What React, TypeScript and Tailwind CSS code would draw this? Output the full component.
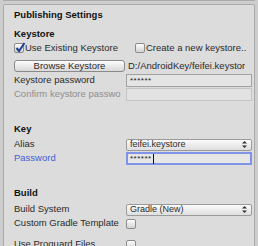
import React from "react";

const font = { fontFamily: '"Liberation Sans", Arial, sans-serif' };

function Check({ checked }: { checked?: boolean }) {
  return (
    <div className="relative w-[10px] h-[10px] shrink-0 rounded-[2px] border border-[#8c8c8c] bg-gradient-to-b from-[#fdfdfd] to-[#d2d2d2]">
      {checked && (
        <svg className="absolute left-[0px] top-[-2px]" width="11" height="11" viewBox="0 0 11 11">
          <path d="M1.5 6 L4 9 L9.5 1" stroke="#1d3f8f" strokeWidth="2" fill="none" />
        </svg>
      )}
    </div>
  );
}

function Arrows() {
  return (
    <svg width="5" height="7" viewBox="0 0 5 7">
      <path d="M2.5 0 L5 2.6 L0 2.6 Z" fill="#333" />
      <path d="M2.5 7 L5 4.4 L0 4.4 Z" fill="#333" />
    </svg>
  );
}

function Popup({ value }: { value: string }) {
  return (
    <div className="w-[126px] h-[12px] flex items-center justify-between pl-[3px] pr-[4px] rounded-[2px] border border-[#9a9a9a] bg-gradient-to-b from-[#fbfbfb] to-[#dedede] text-[9px] text-[#2a2a2a]">
      <span>{value}</span>
      <Arrows />
    </div>
  );
}

function Row({ label, children, className = "", labelClass = "text-[#2a2a2a]" }: { label: string; children?: React.ReactNode; className?: string; labelClass?: string }) {
  return (
    <div className={`flex items-center h-[13px] ${className}`}>
      <div className={`w-[112px] shrink-0 whitespace-nowrap overflow-hidden text-[9.5px] ${labelClass}`}>{label}</div>
      {children}
    </div>
  );
}

export default function App() {
  return (
    <div className="w-[258px] h-[246px] overflow-hidden bg-[#cdcdcd] flex flex-col" style={font}>
      {/* previous section edge */}
      <div className="h-[4px] mx-[3px] border-x border-b border-[#ababab] bg-[#dadada] rounded-b-[2px]" />

      <div className="mt-[3px] mx-[3px] flex-1 border-x border-t border-[#aaaaaa] bg-[#dcdcdc] rounded-t-[2px] pl-[10px] pr-[1px] flex flex-col">
        <div className="h-[14px] mt-[3px] flex items-center text-[9.5px] font-bold text-[#111]">Publishing Settings</div>

        <div className="h-[14px] mt-[5px] flex items-center text-[9.5px] font-bold text-[#111]">Keystore</div>

        <div className="h-[14px] flex items-center text-[9.5px] text-[#2a2a2a]">
          <div className="w-[121px] flex items-center gap-[1px]">
            <Check checked />
            <span>Use Existing Keystore</span>
          </div>
          <div className="flex items-center gap-[1px] whitespace-nowrap">
            <Check />
            <span>Create a new keystore..</span>
          </div>
        </div>

        <div className="h-[12px] mt-[5px] flex items-center">
          <div className="w-[111px] h-[12px] flex items-center justify-center rounded-[3px] border border-[#8a8a8a] bg-gradient-to-b from-[#fcfcfc] to-[#d9d9d9] text-[9.5px] text-[#2a2a2a]">Browse Keystore</div>
          <div className="ml-[3px] text-[9.5px] text-[#2a2a2a] whitespace-nowrap overflow-hidden">D:/AndroidKey/feifei.keystor</div>
        </div>

        <Row label="Keystore password" className="mt-[2px]">
          <div className="w-[126px] h-[13px] border border-[#a2a2a2] bg-[#e4e4e4] pl-[3px] flex items-center text-[8px] text-[#222] tracking-[0.5px]">******</div>
        </Row>

        <Row label="Confirm keystore passwo" className="mt-[1px]" labelClass="text-[#8e8e8e]">
          <div className="w-[126px] h-[13px] border border-[#c4c4c4] bg-[#e2e2e2]" />
        </Row>

        <div className="h-[14px] mt-[21px] flex items-center text-[9.5px] font-bold text-[#111]">Key</div>

        <Row label="Alias" className="mt-[2px]">
          <Popup value="feifei.keystore" />
        </Row>

        <Row label="Password" className="mt-[1px]" labelClass="text-[#3c5fd6]">
          <div className="w-[126px] h-[13px] border-2 border-[#8093e6] bg-[#e6e6e6] pl-[2px] flex items-center text-[8px] text-[#222] tracking-[0.5px]">
            ******
            <span className="w-[1px] h-[10px] bg-[#111] ml-[1px]" />
          </div>
        </Row>

        <div className="h-[14px] mt-[21px] flex items-center text-[9.5px] font-bold text-[#111]">Build</div>

        <Row label="Build System" className="mt-[3px]">
          <Popup value="Gradle (New)" />
        </Row>

        <Row label="Custom Gradle Template" className="mt-[1px]">
          <Check />
        </Row>

        <Row label="Use Proguard Files" className="mt-[8px]">
          <Check />
        </Row>
      </div>
    </div>
  );
}
